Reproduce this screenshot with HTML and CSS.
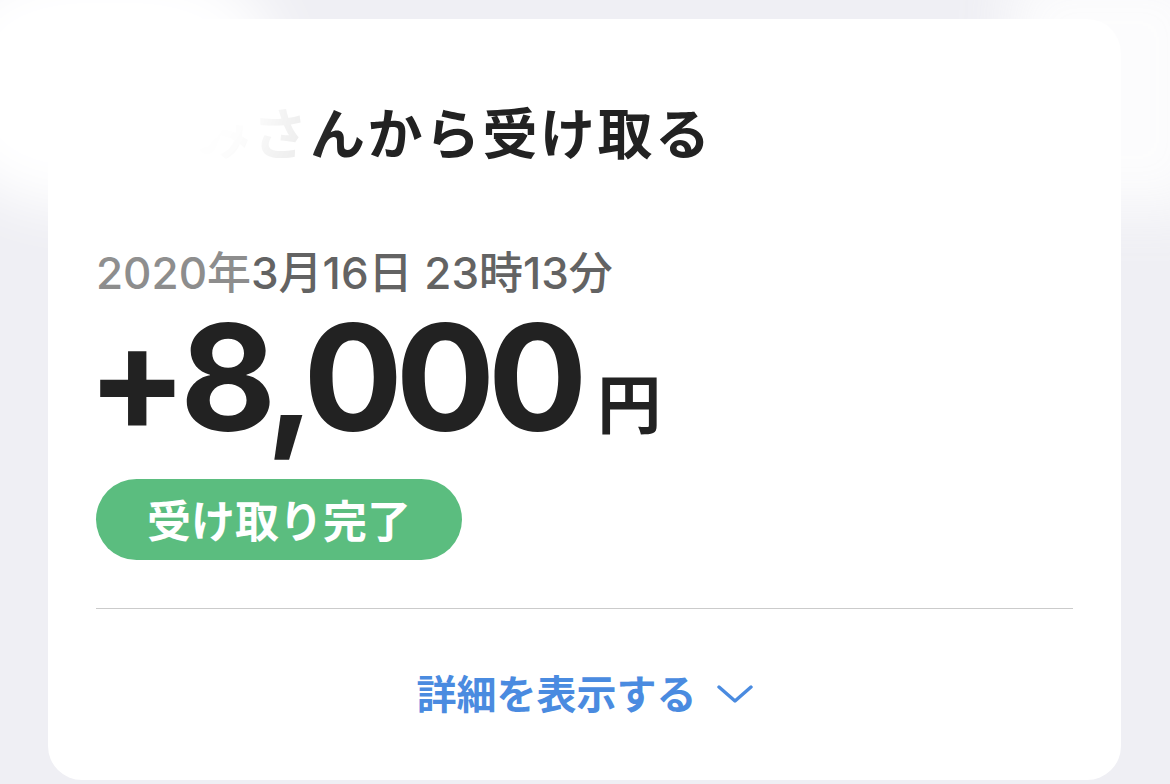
FILE: index.html
```html
<!DOCTYPE html>
<html lang="ja">
<head>
    <meta charset="UTF-8">
    <title>受け取り詳細</title>
    <link rel="stylesheet" href="styles.css">
</head>
<body>
    <div class="card">
        <h1 class="title"><span class="hidden-name">たか</span><span class="faded-name">みさ</span>んから受け取る</h1>

        <p class="date"><span class="faded-year">2020年</span>3月16日 23時13分</p>

        <div class="amount">
            <span class="amount-value">+8,000</span>
            <span class="amount-unit">円</span>
        </div>

        <span class="status">受け取り完了</span>

        <hr class="divider">

        <div class="details">
            <span>詳細を表示する</span>
            <svg class="chevron" width="36" height="18" viewBox="0 0 36 18">
                <polyline points="2,2 18,16 34,2" fill="none" stroke="#4a8be0" stroke-width="3.4" stroke-linecap="round" stroke-linejoin="round"/>
            </svg>
        </div>
    </div>

    <!-- 画面上の白いぼかし -->
    <div class="smudge smudge-left"></div>
    <div class="smudge smudge-right"></div>
</body>
</html>
```

FILE: styles.css
```css
body {
    margin: 0;
    background-color: #efeff4;
    font-family: "Noto Sans CJK JP", "Noto Sans", sans-serif;
    overflow: hidden;
}
.card {
    margin: 19px 0 0 48px;
    width: 1073px;
    height: 761px;
    box-sizing: border-box;
    padding: 0 48px;
    background-color: #fff;
    border-radius: 34px;
}
.title {
    margin: 0 0 0 -16px;
    padding-top: 81px;
    font-size: 55px;
    line-height: 60px;
    font-weight: 700;
    letter-spacing: 2.5px;
    color: #222;
}
.hidden-name {
    color: #fff;
}
.faded-name {
    color: #ececec;
}
.date {
    margin: 91px 0 0;
    font-family: Inter, "Noto Sans CJK JP", sans-serif;
    font-size: 44px;
    line-height: 44px;
    font-weight: 500;
    color: #636363;
}
.faded-year {
    color: #8d8d8d;
}
.amount {
    display: flex;
    align-items: flex-end;
    gap: 17px;
    margin-top: 27px;
    color: #222;
}
.amount-value {
    margin-left: -9px;
    font-family: Inter, "Noto Sans", sans-serif;
    font-size: 148px;
    line-height: 112px;
    font-weight: 700;
    letter-spacing: -7.5px;
}
.amount-unit {
    margin-bottom: 2px;
    font-size: 64px;
    line-height: 1;
    font-weight: 700;
}
.status {
    display: inline-block;
    margin-top: 45px;
    height: 81px;
    line-height: 81px;
    padding: 0 51px;
    border-radius: 41px;
    background-color: #5bbd7f;
    color: #fff;
    font-size: 44px;
    font-weight: 700;
}
.divider {
    margin: 48px 0 0;
    border: none;
    border-top: 1px solid #cbcbcb;
}
.details {
    display: flex;
    justify-content: center;
    align-items: center;
    gap: 20px;
    margin-top: 60px;
    color: #4a8be0;
    font-size: 40px;
    font-weight: 700;
    line-height: 46px;
}
.chevron {
    margin-top: 4px;
}
.smudge {
    position: absolute;
    pointer-events: none;
    background: #fff;
    filter: blur(28px);
}
.smudge-left {
    left: -60px;
    top: -40px;
    width: 340px;
    height: 250px;
    border-radius: 40%;
}
.smudge-right {
    left: 1010px;
    top: -30px;
    width: 200px;
    height: 240px;
    opacity: 0.85;
}
```
